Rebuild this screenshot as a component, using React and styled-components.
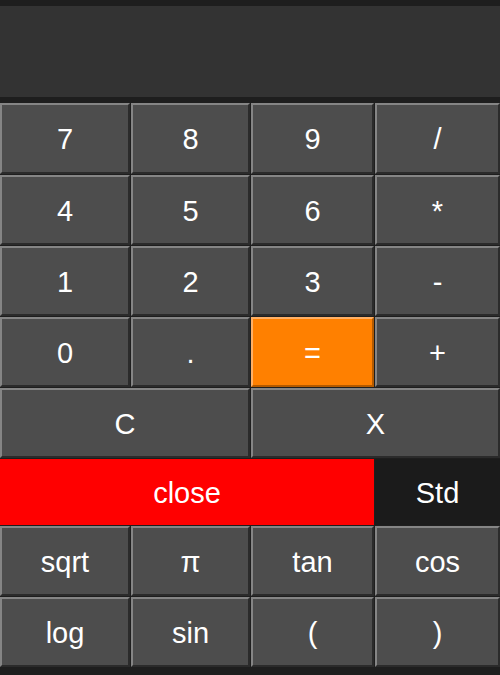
import React from 'react';
import styled, { createGlobalStyle } from 'styled-components';

const GlobalStyle = createGlobalStyle`
  body {
    margin: 0;
    background: #1e1e1e;
    font-family: "Liberation Sans", Arial, sans-serif;
  }
`

const Wrapper = styled.div`
  display: flex;
  flex-direction: column;
  width: 500px;
  height: 675px;
  padding-top: 6px;
  box-sizing: border-box;
  background: #1e1e1e;
`

const Display = styled.div`
  height: 91px;
  background: #333333;
  margin-bottom: 6px;
  color: #fff;
  font-size: 28px;
`

const Keys = styled.div`
  display: grid;
  grid-template-columns: 130px 119px 123px 125px;
  grid-template-rows: 71px 70px 70px 70px 70px 66px 70px 70px;
  gap: 1px;
`

const Key = styled.button`
  display: flex;
  align-items: center;
  justify-content: center;
  grid-column: span ${props => props.span || 1};
  margin: 0;
  padding: 2px 0 0;
  background: ${props => props.bg || '#4d4d4d'};
  color: #fff;
  font-family: "Liberation Sans", Arial, sans-serif;
  font-size: 29px;
  border-style: solid;
  border-width: ${props => props.flat ? '0' : '2px'};
  border-color: ${props => props.edge || '#858585 #2b2b2b #2b2b2b #858585'};
  box-sizing: border-box;
`

const rows = [
  ['7', '8', '9', '/'],
  ['4', '5', '6', '*'],
  ['1', '2', '3', '-'],
]

const Calculator = () => {
  return (
    <Wrapper>
      <Display />
      <Keys>
        {rows.map(r => r.map(k => <Key key={k}>{k}</Key>))}
        <Key>0</Key>
        <Key>.</Key>
        <Key bg="#ff8000" edge="#ffb066 #b35a00 #b35a00 #ffb066">=</Key>
        <Key>+</Key>
        <Key span={2}>C</Key>
        <Key span={2}>X</Key>
        <Key span={3} flat bg="#ff0000">close</Key>
        <Key flat bg="#1b1b1b">Std</Key>
        <Key>sqrt</Key>
        <Key>π</Key>
        <Key>tan</Key>
        <Key>cos</Key>
        <Key>log</Key>
        <Key>sin</Key>
        <Key>(</Key>
        <Key>)</Key>
      </Keys>
    </Wrapper>
  )
}

const App = () => (
  <>
    <GlobalStyle />
    <Calculator />
  </>
)

export default App
